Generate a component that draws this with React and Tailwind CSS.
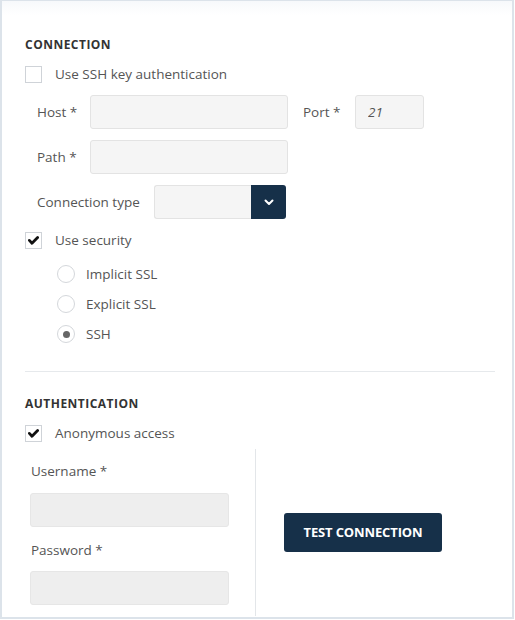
import { useState } from "react";

const font = { fontFamily: '"Open Sans", "Liberation Sans", sans-serif' };

function Checkbox({ checked, label, onChange }) {
  return (
    <label className="flex items-center h-[18px] cursor-pointer" onClick={onChange}>
      <span className="shrink-0 w-[17px] h-[17px] border border-[#cfd3d8] bg-white flex items-center justify-center">
        {checked && (
          <svg width="11" height="9" viewBox="0 0 11 9">
            <path d="M1.4 4.4 L4 7.2 L9.6 1.6" fill="none" stroke="#111" strokeWidth="2.8" strokeLinecap="round" strokeLinejoin="round" />
          </svg>
        )}
      </span>
      <span className="ml-[13px] text-[13.5px] text-[#555] whitespace-nowrap">{label}</span>
    </label>
  );
}

function Radio({ checked, label, onClick }) {
  return (
    <div className="flex items-center h-[18px] cursor-pointer" onClick={onClick}>
      <span className="shrink-0 w-[18px] h-[18px] rounded-full border border-[#d4d7db] bg-white flex items-center justify-center">
        {checked && <span className="w-[7px] h-[7px] rounded-full bg-[#666]" />}
      </span>
      <span className="ml-[11px] text-[13.5px] text-[#555]">{label}</span>
    </div>
  );
}

const baseInput =
  "shrink-0 h-[34px] rounded-[3px] border px-3 text-[13.5px] text-[#555] outline-none";
const inputCls = `${baseInput} border-[#e3e3e3] bg-[#f5f5f5]`;
const disabledCls = `${baseInput} border-[#e6e6e6] bg-[#eeeeee]`;
const labelCls = "shrink-0 whitespace-nowrap text-[13.5px] text-[#555]";

export default function App() {
  const [sshKey, setSshKey] = useState(false);
  const [security, setSecurity] = useState(true);
  const [anon, setAnon] = useState(true);
  const [mode, setMode] = useState("ssh");

  return (
    <div style={font} className="w-[515px] h-[620px] bg-white">
      <div className="w-[514px] h-[619px] border-t border-l-2 border-r-2 border-b-2 border-[#dce3ea] bg-gradient-to-b from-[#f7f9fb] to-white to-[14px] pt-[36px] pl-[23px] pr-[16px]">
        {/* connection */}
        <h3 className="text-[12px] font-bold tracking-[0.04em] text-[#333] leading-[16px]">CONNECTION</h3>
        <div className="mt-[12px]">
          <Checkbox checked={sshKey} label="Use SSH key authentication" onChange={() => setSshKey(!sshKey)} />
        </div>

        <div className="mt-[12px] flex items-center">
          <span className={`${labelCls} w-[65px] pl-[12px]`}>Host *</span>
          <input className={`${inputCls} w-[198px]`} />
          <span className={`${labelCls} ml-[15px] w-[52px]`}>Port *</span>
          <input className={`${inputCls} w-[69px] italic`} defaultValue="21" />
        </div>

        <div className="mt-[11px] flex items-center">
          <span className={`${labelCls} w-[65px] pl-[12px]`}>Path *</span>
          <input className={`${inputCls} w-[198px]`} />
        </div>

        <div className="mt-[11px] flex items-center">
          <span className={`${labelCls} w-[129px] pl-[12px]`}>Connection type</span>
          <div className="flex h-[34px]">
            <div className="w-[97px] h-full border border-[#e3e3e3] border-r-0 bg-[#f5f5f5] rounded-l-[3px]" />
            <button className="w-[35px] h-full bg-[#163049] rounded-r-[3px] flex items-center justify-center">
              <svg width="10" height="7" viewBox="0 0 10 7">
                <path d="M1.5 1.5 L5 5 L8.5 1.5" fill="none" stroke="#fff" strokeWidth="2" strokeLinecap="round" strokeLinejoin="round" />
              </svg>
            </button>
          </div>
        </div>

        <div className="mt-[12px]">
          <Checkbox checked={security} label="Use security" onChange={() => setSecurity(!security)} />
        </div>

        <div className="mt-[16px] pl-[32px] flex flex-col gap-[12px]">
          <Radio checked={mode === "implicit"} label="Implicit SSL" onClick={() => setMode("implicit")} />
          <Radio checked={mode === "explicit"} label="Explicit SSL" onClick={() => setMode("explicit")} />
          <Radio checked={mode === "ssh"} label="SSH" onClick={() => setMode("ssh")} />
        </div>

        <div className="mt-[28px] h-px bg-[#e6e9ec] mr-[1px]" />

        {/* authentication */}
        <h3 className="mt-[24px] text-[12px] font-bold tracking-[0.04em] text-[#333] leading-[16px]">AUTHENTICATION</h3>
        <div className="mt-[12px]">
          <Checkbox checked={anon} label="Anonymous access" onChange={() => setAnon(!anon)} />
        </div>

        <div className="mt-[7px] flex">
          <div className="w-[230px] pl-[5px] pt-[12px] pb-[11px]">
            <div className="pl-px text-[13.5px] text-[#555] leading-[20px]">Username *</div>
            <input disabled={anon} className={`${disabledCls} mt-[12px] w-[199px]`} />
            <div className="pl-px mt-[13px] text-[13.5px] text-[#555] leading-[20px]">Password *</div>
            <input disabled={anon} type="password" className={`${disabledCls} mt-[11px] w-[199px]`} />
          </div>
          <div className="w-px bg-[#e3e6e9]" />
          <div className="flex-1 flex items-center pl-[28px]">
            <button className="h-[39px] w-[158px] rounded-[3px] bg-[#163049] text-white text-[13px] font-bold tracking-[-0.01em]">
              TEST CONNECTION
            </button>
          </div>
        </div>
      </div>
    </div>
  );
}
